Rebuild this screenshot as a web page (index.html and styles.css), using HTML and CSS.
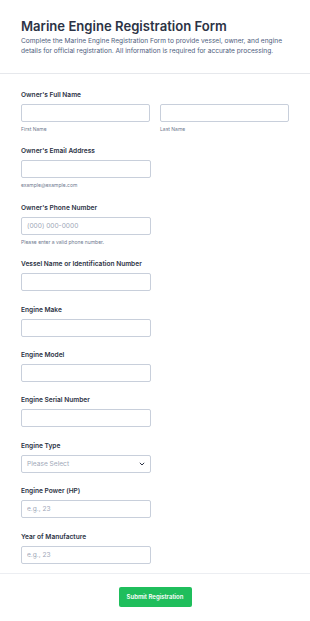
FILE: index.html
```html
<!DOCTYPE html>
<html lang="en">
<head>
<meta charset="utf-8">
<title>Marine Engine Registration Form</title>
<link rel="stylesheet" href="styles.css">
</head>
<body>
<div class="page">
  <header class="header">
    <h1 class="title">Marine Engine Registration Form</h1>
    <p class="subtitle">Complete the Marine Engine Registration Form to provide vessel, owner, and engine details for official registration. All information is required for accurate processing.</p>
  </header>
  <form class="form">
    <div class="field">
      <label class="label">Owner's Full Name</label>
      <div class="name-row">
        <div class="name-col">
          <input class="input full" type="text">
          <span class="sublabel">First Name</span>
        </div>
        <div class="name-col">
          <input class="input full" type="text">
          <span class="sublabel">Last Name</span>
        </div>
      </div>
    </div>
    <div class="field">
      <label class="label">Owner's Email Address</label>
      <input class="input" type="email">
      <span class="sublabel">example@example.com</span>
    </div>
    <div class="field">
      <label class="label">Owner's Phone Number</label>
      <input class="input" type="tel" placeholder="(000) 000-0000">
      <span class="sublabel">Please enter a valid phone number.</span>
    </div>
    <div class="field">
      <label class="label">Vessel Name or Identification Number</label>
      <input class="input" type="text">
    </div>
    <div class="field">
      <label class="label">Engine Make</label>
      <input class="input" type="text">
    </div>
    <div class="field">
      <label class="label">Engine Model</label>
      <input class="input" type="text">
    </div>
    <div class="field">
      <label class="label">Engine Serial Number</label>
      <input class="input" type="text">
    </div>
    <div class="field">
      <label class="label">Engine Type</label>
      <div class="select">
        <span class="select-text">Please Select</span>
        <svg class="chev" width="6" height="4" viewBox="0 0 6 4"><path d="M0.8 0.8 L3 3 L5.2 0.8" fill="none" stroke="#2c3345" stroke-width="1"/></svg>
      </div>
    </div>
    <div class="field">
      <label class="label">Engine Power (HP)</label>
      <input class="input" type="text" placeholder="e.g., 23">
    </div>
    <div class="field">
      <label class="label">Year of Manufacture</label>
      <input class="input" type="text" placeholder="e.g., 23">
    </div>
  </form>
  <div class="footer">
    <button class="submit" type="button">Submit Registration</button>
  </div>
</div>
</body>
</html>
```

FILE: styles.css
```css
* { box-sizing: border-box; }
html, body { margin: 0; padding: 0; background: #fff; }
body { font-family: Inter, "Noto Sans", sans-serif; color: #2c3345; }
.page { width: 310px; }
.header {
  padding: 16px 21px 17px;
  border-bottom: 1px solid #e6e8ec;
}
.title {
  margin: 0;
  font-size: 13.1px;
  line-height: 20px;
  font-weight: 600;
  color: #2c3345;
}
.subtitle {
  margin: 0;
  font-size: 6.6px;
  line-height: 10px;
  color: #4e5d7d;
}
.form {
  padding: 16px 21px 0;
  border-bottom: 1px solid #eceef2;
}
.field {
  display: flex;
  flex-direction: column;
  align-items: flex-start;
  padding-bottom: 13.4px;
}
.field:last-child { padding-bottom: 9px; }
.label {
  font-size: 6.6px;
  line-height: 10px;
  font-weight: 600;
  color: #2c3345;
  margin-bottom: 4px;
}
.name-row {
  display: flex;
  gap: 10px;
  width: 100%;
}
.name-col {
  display: flex;
  flex-direction: column;
  width: 130px;
}
.input {
  width: 130px;
  height: 18px;
  border: 1px solid #c8cfdb;
  border-radius: 2px;
  background: #fff;
  padding: 0 5px;
  font-family: Inter, "Noto Sans", sans-serif;
  font-size: 6.6px;
  color: #2c3345;
  outline: none;
}
.input.full { width: 100%; }
.input::placeholder { color: #a0a8b8; }
.sublabel {
  margin-top: 3px;
  font-size: 5px;
  line-height: 8px;
  color: #6f7a8f;
}
.select {
  width: 130px;
  height: 18px;
  border: 1px solid #c8cfdb;
  border-radius: 2px;
  display: flex;
  align-items: center;
  justify-content: space-between;
  padding: 0 5px;
}
.select-text {
  font-size: 6.6px;
  color: #a0a8b8;
}
.chev { display: block; }
.footer {
  display: flex;
  justify-content: center;
  padding: 13px 0 17px;
}
.submit {
  width: 73px;
  height: 20px;
  border: none;
  border-radius: 2px;
  background: #1fbe5c;
  color: #fff;
  font-family: Inter, "Noto Sans", sans-serif;
  font-size: 6px;
  font-weight: 600;
  padding: 0;
}
```
